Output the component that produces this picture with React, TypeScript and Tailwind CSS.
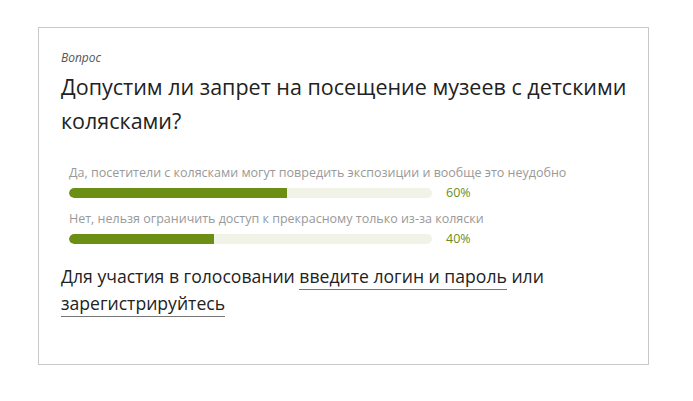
import React from 'react';

const options = [
  { label: 'Да, посетители с колясками могут повредить экспозиции и вообще это неудобно', percent: 60 },
  { label: 'Нет, нельзя ограничить доступ к прекрасному только из-за коляски', percent: 40 },
];

export default function App() {
  return (
    <div className="min-h-screen bg-white pt-[27px] pl-[38px]" style={{ fontFamily: '"Open Sans", sans-serif' }}>
      <div className="w-[611px] h-[338px] border border-[#c8c8c8] pl-[22px] pr-[10px] pt-[21px]">
        <div className="text-[12px] italic text-[#555] leading-[18px]">Вопрос</div>
        <h2 className="mt-[3px] text-[21.5px] leading-[34px] text-[#222] font-normal">
          Допустим ли запрет на посещение музеев с детскими колясками?
        </h2>

        <div className="mt-[26px] pl-[8px] flex flex-col gap-[9px]">
          {options.map((o) => (
            <div key={o.label}>
              <div className="text-[12.5px] leading-[17px] text-[#999]">{o.label}</div>
              <div className="flex items-center mt-[3px]">
                <div className="w-[363px] h-[10px] rounded-full bg-[#f0f3e6] overflow-hidden">
                  <div className="h-full bg-[#6b8e15] rounded-l-full" style={{ width: `${o.percent}%` }} />
                </div>
                <span className="ml-[14px] text-[12.5px] leading-[17px] text-[#6b8e23]">{o.percent}%</span>
              </div>
            </div>
          ))}
        </div>

        <p className="mt-[16px] text-[17.6px] leading-[27px] text-[#222]">
          Для участия в голосовании{' '}
          <a href="#" className="border-b border-[#777] pb-[1px]">введите логин и пароль</a> или{' '}
          <a href="#" className="border-b border-[#777] pb-[1px]">зарегистрируйтесь</a>
        </p>
      </div>
    </div>
  );
}
